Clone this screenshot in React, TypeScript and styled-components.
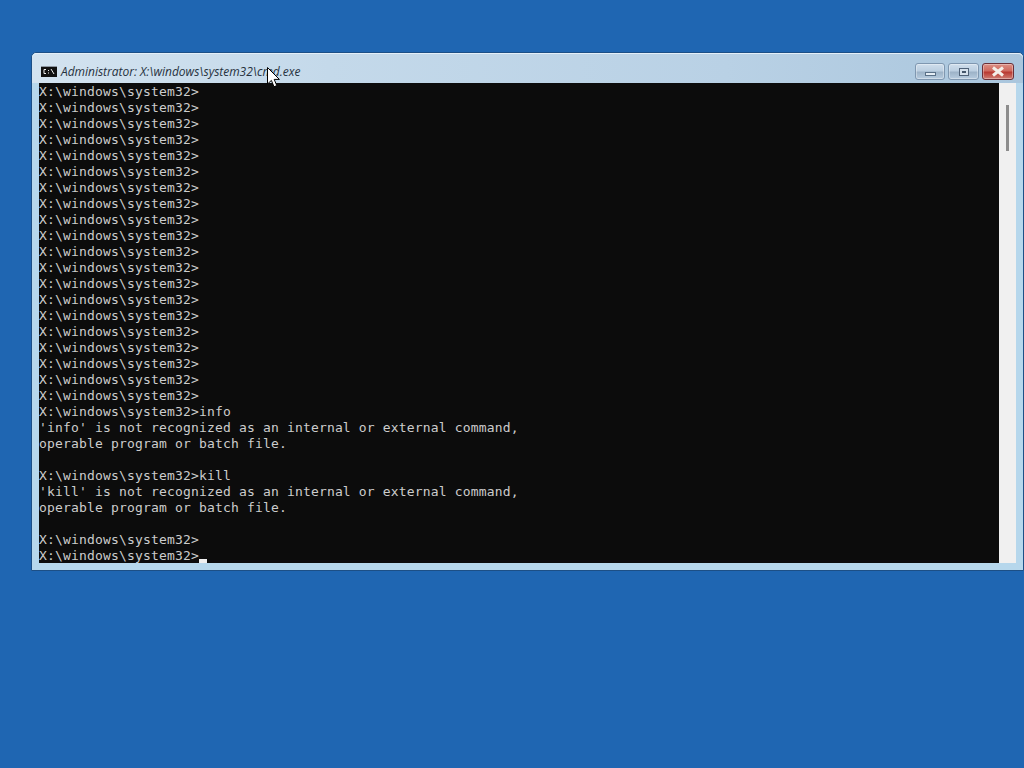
import styled, { createGlobalStyle } from "styled-components"

const GlobalStyle = createGlobalStyle`
    html, body {
        margin: 0;
        padding: 0;
        background: #1f66b2;
    }
`

const Desktop = styled.div`
    position: relative;
    width: 1024px;
    height: 768px;
    padding: 52px 0 0 31px;
    box-sizing: border-box;
    overflow: hidden;
    background: #1f66b2;
`

const Win = styled.div`
    width: 993px;
    height: 519px;
    box-sizing: border-box;
    display: flex;
    flex-direction: column;
    border: 1px solid #1c4f86;
    border-radius: 5px 5px 0 0;
    background: #b6d7ec;
`

const TitleBar = styled.div`
    height: 30px;
    flex: none;
    display: flex;
    align-items: center;
    padding: 7px 8px 0 9px;
    box-sizing: border-box;
    background: linear-gradient(90deg, #d3e3f0 0, #c4d9ea 30%, #b9d1e5 70%, #aac6dd 100%);
    border-radius: 5px 5px 0 0;
    box-shadow: inset 0 1px 0 #e4eff8;
`

const TitleIcon = styled.svg`
    width: 16px;
    height: 11px;
    flex: none;
    margin-right: 4px;
`

const TitleText = styled.div`
    flex: 1;
    font-family: "Open Sans", "Liberation Sans", sans-serif;
    font-style: italic;
    font-size: 12px;
    letter-spacing: -0.02px;
    color: #26323e;
    white-space: nowrap;
`

const Controls = styled.div`
    display: flex;
    gap: 3px;
    margin-right: 1px;
`

const CtlButton = styled.div<{ $close?: boolean; $wide: number }>`
    width: ${(p) => p.$wide}px;
    height: 17px;
    box-sizing: border-box;
    display: flex;
    align-items: center;
    justify-content: center;
    border: 1px solid ${(p) => (p.$close ? "#6b3038" : "#7f97b0")};
    border-radius: 3px;
    background: ${(p) =>
        p.$close
            ? "linear-gradient(180deg, #dc8f84 0, #cf6a5f 45%, #b93a32 55%, #cf7d72 100%)"
            : "linear-gradient(180deg, #cfdeec 0, #bccfe1 45%, #9db3c8 55%, #b7ccdf 100%)"};
    box-shadow: inset 0 0 0 1px rgba(255, 255, 255, 0.35);
`

const MinGlyph = styled.div`
    width: 11px;
    height: 4px;
    margin-top: 4px;
    box-sizing: border-box;
    border: 1px solid #5a7087;
    background: #e6eef5;
`

const MaxGlyph = styled.div`
    width: 10px;
    height: 8px;
    box-sizing: border-box;
    border: 1px solid #4f6278;
    background: #d5e1ec;
    display: flex;
    align-items: center;
    justify-content: center;
    &::after {
        content: "";
        width: 4px;
        height: 2px;
        background: #44566b;
    }
`

const Body = styled.div`
    flex: none;
    height: 480px;
    display: flex;
    margin: 0 6px 0 7px;
`

const Console = styled.pre`
    flex: none;
    width: 960px;
    height: 480px;
    margin: 0;
    padding-top: 1px;
    box-sizing: border-box;
    overflow: hidden;
    background: #0c0c0c;
    color: #cccccc;
    font-family: "DejaVu Sans Mono", "Liberation Mono", monospace;
    font-size: 13px;
    letter-spacing: 0.17px;
    line-height: 16px;
`

const Caret = styled.span`
    display: inline-block;
    width: 8px;
    height: 4px;
    background: #f0f0f0;
    vertical-align: -3px;
`

const ScrollBar = styled.div`
    flex: none;
    width: 17px;
    background: #f0f0f0;
    display: flex;
    justify-content: center;
    padding-top: 22px;
    box-sizing: border-box;
`

const Thumb = styled.div`
    width: 3px;
    height: 46px;
    background: #8d8d8d;
`

const Pointer = styled.svg`
    position: absolute;
    left: 267px;
    top: 67px;
    width: 13px;
    height: 21px;
`

const PROMPT = "X:\\windows\\system32>"

const lines = [
    ...Array(20).fill(PROMPT),
    PROMPT + "info",
    "'info' is not recognized as an internal or external command,",
    "operable program or batch file.",
    "",
    PROMPT + "kill",
    "'kill' is not recognized as an internal or external command,",
    "operable program or batch file.",
    "",
    PROMPT,
    PROMPT,
]

export default function App() {
    return (
        <>
            <GlobalStyle />
            <Desktop>
                <Win>
                    <TitleBar>
                        <TitleIcon viewBox="0 0 16 11">
                            <rect x="0" y="0" width="16" height="11" fill="#111" />
                            <path d="M0 0.5H16" stroke="#8e98a3" />
                            <path d="M5 3.5H3V7.5H5M7.5 4V5M7.5 6.5V7.5M10 3L13 8" stroke="#eee" fill="none" />
                        </TitleIcon>
                        <TitleText>Administrator: X:\windows\system32\cmd.exe</TitleText>
                        <Controls>
                            <CtlButton $wide={30}><MinGlyph /></CtlButton>
                            <CtlButton $wide={31}><MaxGlyph /></CtlButton>
                            <CtlButton $close $wide={32}>
                                <svg width="14" height="11" viewBox="0 0 14 11">
                                    <path d="M2 1.5L12 9.5M12 1.5L2 9.5" stroke="#f4efe9" strokeWidth="3" />
                                </svg>
                            </CtlButton>
                        </Controls>
                    </TitleBar>
                    <Body>
                        <Console>
                            {lines.join("\n")}
                            <Caret />
                        </Console>
                        <ScrollBar><Thumb /></ScrollBar>
                    </Body>
                </Win>
                <Pointer viewBox="0 0 13 21">
                    <path d="M0.5 0.5V17L4.4 13.4L7 19.8L9.8 18.6L7.2 12.4H12.4Z" fill="#fff" stroke="#000" strokeWidth="1" />
                </Pointer>
            </Desktop>
        </>
    )
}
